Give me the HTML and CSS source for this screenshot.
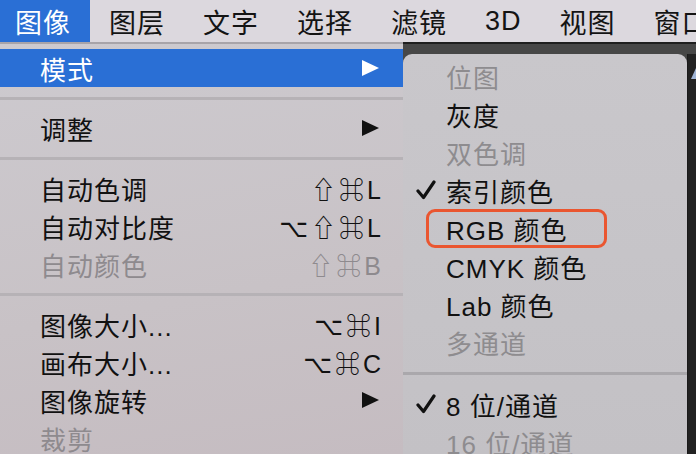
FILE: index.html
```html
<!DOCTYPE html>
<html lang="zh-CN">
<head>
    <meta charset="UTF-8">
    <title>图像 - 模式</title>
    <link rel="stylesheet" href="styles.css">
</head>
<body>

<!-- Barre de menu -->
<div class="menubar">
    <span class="menubar-item active">图像</span>
    <span class="menubar-item">图层</span>
    <span class="menubar-item">文字</span>
    <span class="menubar-item">选择</span>
    <span class="menubar-item">滤镜</span>
    <span class="menubar-item">3D</span>
    <span class="menubar-item">视图</span>
    <span class="menubar-item">窗口</span>
</div>

<div class="screen">
    <!-- Menu principal -->
    <div class="menu">
        <div class="row selected"><span class="label">模式</span><span class="arrow"></span></div>
        <div class="sep"></div>
        <div class="row"><span class="label">调整</span><span class="arrow"></span></div>
        <div class="sep"></div>
        <div class="row"><span class="label">自动色调</span><span class="key">⇧⌘L</span></div>
        <div class="row"><span class="label">自动对比度</span><span class="key">⌥⇧⌘L</span></div>
        <div class="row disabled"><span class="label">自动颜色</span><span class="key">⇧⌘B</span></div>
        <div class="sep"></div>
        <div class="row"><span class="label">图像大小...</span><span class="key">⌥⌘I</span></div>
        <div class="row"><span class="label">画布大小...</span><span class="key">⌥⌘C</span></div>
        <div class="row"><span class="label">图像旋转</span><span class="arrow"></span></div>
        <div class="row disabled"><span class="label">裁剪</span></div>
    </div>

    <!-- Sous-menu Mode -->
    <div class="workspace">
        <div class="submenu">
            <div class="sub-row disabled"><span class="check"></span>位图</div>
            <div class="sub-row"><span class="check"></span>灰度</div>
            <div class="sub-row disabled"><span class="check"></span>双色调</div>
            <div class="sub-row"><span class="check"><svg width="20" height="20" viewBox="0 0 20 20"><path d="M2 11 L7.5 17.5 L18 2" fill="none" stroke="#111" stroke-width="3.2" stroke-linecap="round" stroke-linejoin="round"/></svg></span>索引颜色</div>
            <div class="sub-row"><span class="check"></span><span class="highlight">RGB 颜色</span></div>
            <div class="sub-row"><span class="check"></span>CMYK 颜色</div>
            <div class="sub-row"><span class="check"></span>Lab 颜色</div>
            <div class="sub-row disabled"><span class="check"></span>多通道</div>
            <div class="sub-sep"></div>
            <div class="sub-row"><span class="check"><svg width="20" height="20" viewBox="0 0 20 20"><path d="M2 11 L7.5 17.5 L18 2" fill="none" stroke="#111" stroke-width="3.2" stroke-linecap="round" stroke-linejoin="round"/></svg></span>8 位/通道</div>
            <div class="sub-row disabled"><span class="check"></span>16 位/通道</div>
        </div>
        <div class="edge"><span class="edge-mark"></span></div>
    </div>
</div>

</body>
</html>
```

FILE: styles.css
```css
* {
    margin: 0;
    padding: 0;
    box-sizing: border-box;
}
body {
    width: 696px;
    height: 454px;
    overflow: hidden;
    font-family: 'Liberation Sans', 'Noto Sans CJK SC', 'DejaVu Sans', sans-serif;
    color: #111;
    background: #474747;
}

/* Barre de menu */
.menubar {
    display: flex;
    height: 42px;
    background: #dcd8de;
    font-size: 27px;
    white-space: nowrap;
    overflow: hidden;
}
.menubar-item {
    display: flex;
    align-items: center;
    padding: 0 19px;
    letter-spacing: 1px;
    color: #141414;
}
.menubar-item:first-child {
    padding-left: 15px;
}
.menubar-item.active {
    background: #2a6fd5;
    color: #fff;
}

.screen {
    display: flex;
    height: 412px;
}

/* Menu principal */
.menu {
    width: 404px;
    padding-top: 5px;
    border-top: 2px solid #a8a4a9;
    background: linear-gradient(170deg, #cdcacf 0%, #c8c2c6 60%, #c5bcc1 100%);
    font-size: 26px;
}
.row {
    display: flex;
    align-items: center;
    justify-content: space-between;
    height: 38px;
    padding: 0 22px 0 40px;
}
.row.selected {
    background: #2a6fd5;
    color: #fff;
}
.row.disabled {
    color: #8e8a8e;
}
.label {
    letter-spacing: 1px;
}
.arrow {
    width: 0;
    height: 0;
    margin-right: 2px;
    border-top: 8px solid transparent;
    border-bottom: 8px solid transparent;
    border-left: 17px solid #111;
}
.row.selected .arrow {
    border-left-color: #fff;
}
.key {
    font-size: 25px;
    letter-spacing: 3px;
    margin-right: -3px;
}
.sep {
    height: 3px;
    margin: 10px 0 9px;
    background: #b6b2b6;
}

/* Zone de travail */
.workspace {
    flex: 1;
    display: flex;
    padding-top: 10px;
    border-top: 2px solid #1f1f1f;
    background: #474747;
}
.submenu {
    width: 284px;
    padding-top: 3px;
    border-radius: 9px 9px 0 0;
    background: linear-gradient(180deg, #c9c7cb 0%, #c3c1c5 100%);
    font-size: 26px;
}
.sub-row {
    display: flex;
    align-items: center;
    height: 38px;
    white-space: nowrap;
    letter-spacing: 1px;
}
.sub-row.disabled {
    color: #8e8c8f;
}
.check {
    display: flex;
    align-items: center;
    width: 43px;
    padding-left: 13px;
}
.highlight {
    display: flex;
    align-items: center;
    height: 39px;
    margin-left: -20px;
    padding: 0 36px 0 17px;
    border: 3px solid #ea5630;
    border-radius: 9px;
}
.sub-sep {
    height: 3px;
    margin: 11px 0 10px;
    background: #aaa8ac;
}
.edge {
    flex: 1;
    background: #222;
    border-left: 1px solid #1a1a1a;
}
.edge-mark {
    display: block;
    width: 0;
    height: 0;
    margin: 14px 0 0 3px;
    border-left: 5px solid transparent;
    border-bottom: 11px solid #9fb4d6;
}
```
